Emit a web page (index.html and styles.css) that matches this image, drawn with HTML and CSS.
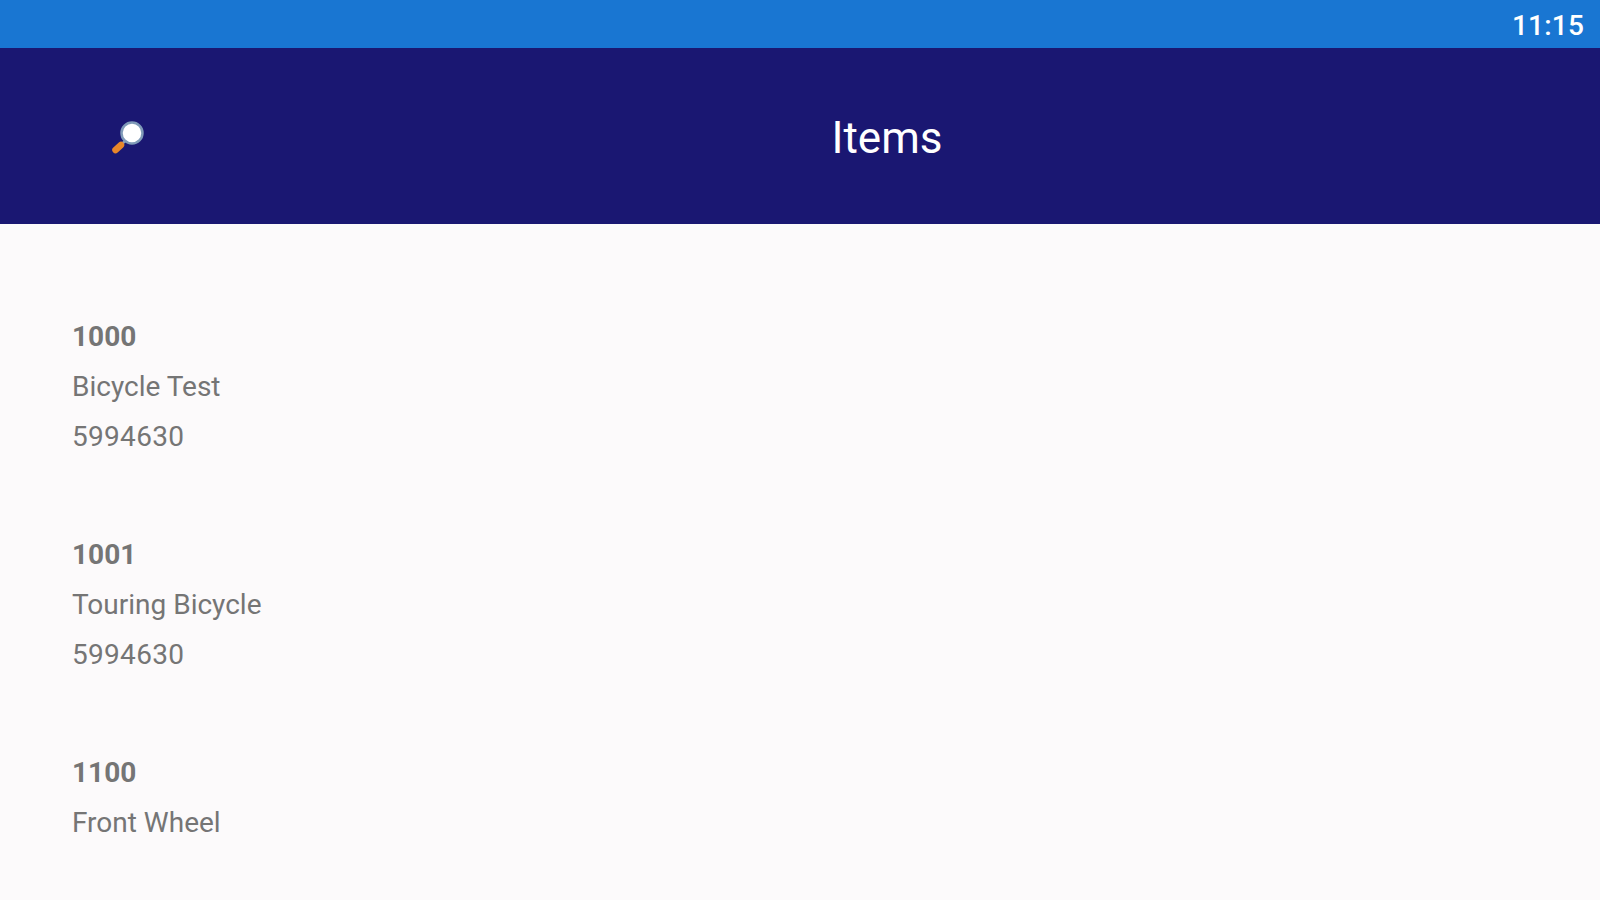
FILE: index.html
```html
<!DOCTYPE html>
<html lang="en">
<head>
    <meta charset="UTF-8">
    <title>Items</title>
    <link rel="stylesheet" href="styles.css">
</head>
<body>
    <div class="status-bar">
        <span class="clock">11:15</span>
    </div>

    <header class="app-bar">
        <div class="search-btn">
            <svg class="search-icon" viewBox="0 0 36 36" width="36" height="36">
                <line x1="12" y1="24" x2="15" y2="21" stroke="#8fa3b5" stroke-width="2.5"/>
                <line x1="5.5" y1="30" x2="11" y2="25" stroke="#e8862a" stroke-width="6.5" stroke-linecap="round"/>
                <circle cx="22" cy="13" r="10.5" fill="#ffffff" stroke="#7f9ab8" stroke-width="2.5"/>
            </svg>
        </div>
        <h1 class="title">Items</h1>
    </header>

    <main class="item-list">
        <div class="item">
            <div class="item-code">1000</div>
            <div class="item-line">Bicycle Test</div>
            <div class="item-line item-sku">5994630</div>
        </div>
        <div class="item">
            <div class="item-code">1001</div>
            <div class="item-line">Touring Bicycle</div>
            <div class="item-line item-sku">5994630</div>
        </div>
        <div class="item">
            <div class="item-code">1100</div>
            <div class="item-line">Front Wheel</div>
        </div>
    </main>
</body>
</html>
```

FILE: styles.css
```css
body {
    margin: 0;
    height: 900px;
    overflow: hidden;
    background: #fcfafb;
    font-family: Roboto, "Liberation Sans", sans-serif;
}

.status-bar {
    height: 48px;
    background: #1976d2;
    display: flex;
    justify-content: flex-end;
    align-items: center;
    padding-right: 16px;
}

.clock {
    color: #fff;
    font-size: 28px;
    font-weight: 500;
    letter-spacing: 0.2px;
    margin-top: 2px;
}

.app-bar {
    height: 176px;
    background: #1a1772;
    display: flex;
    align-items: center;
}

.search-btn {
    width: 146px;
    display: flex;
    justify-content: flex-end;
}

.search-icon {
    display: block;
    margin-top: 4px;
}

.title {
    flex: 1;
    margin: 0;
    padding: 4px 0 0 28px;
    text-align: center;
    color: #fff;
    font-size: 44px;
    font-weight: 400;
}

.item-list {
    padding: 88px 72px 0;
}

.item {
    margin-bottom: 68px;
}

.item-code,
.item-line {
    height: 50px;
    line-height: 50px;
    font-size: 28px;
    color: #757575;
}

.item-code {
    font-weight: 700;
}

.item-sku {
    letter-spacing: 0.3px;
}
```
